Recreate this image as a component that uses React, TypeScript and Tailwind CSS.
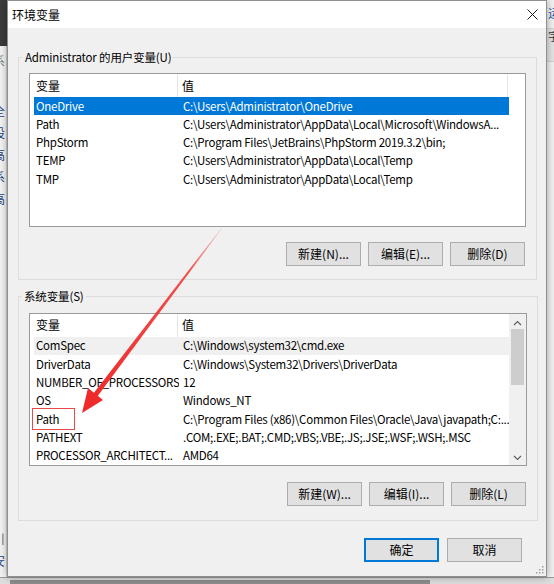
import type { ReactNode } from 'react'

type Row = [string, string]

const userVars: Row[] = [
  ['OneDrive', String.raw`C:\Users\Administrator\OneDrive`],
  ['Path', String.raw`C:\Users\Administrator\AppData\Local\Microsoft\WindowsA...`],
  ['PhpStorm', String.raw`C:\Program Files\JetBrains\PhpStorm 2019.3.2\bin;`],
  ['TEMP', String.raw`C:\Users\Administrator\AppData\Local\Temp`],
  ['TMP', String.raw`C:\Users\Administrator\AppData\Local\Temp`],
]

const sysVars: Row[] = [
  ['ComSpec', String.raw`C:\Windows\system32\cmd.exe`],
  ['DriverData', String.raw`C:\Windows\System32\Drivers\DriverData`],
  ['NUMBER_OF_PROCESSORS', '12'],
  ['OS', 'Windows_NT'],
  ['Path', String.raw`C:\Program Files (x86)\Common Files\Oracle\Java\javapath;C:...`],
  ['PATHEXT', '.COM;.EXE;.BAT;.CMD;.VBS;.VBE;.JS;.JSE;.WSF;.WSH;.MSC'],
  ['PROCESSOR_ARCHITECT...', 'AMD64'],
]

function WinButton({ children, primary }: { children: ReactNode; primary?: boolean }) {
  return (
    <button
      className={[
        'w-[75px] h-[24px] bg-[#e1e1e1] text-[12px] text-black flex items-center justify-center',
        primary ? 'border-2 border-[#0078d7]' : 'border border-[#adadad]',
      ].join(' ')}
    >
      {children}
    </button>
  )
}

function ListHeader({ scroll }: { scroll?: boolean }) {
  return (
    <div className="h-[23px] flex items-center text-[12px]">
      <div className="w-[148px] h-full pl-[6px] flex items-center border-r border-[#e5e5e5]">变量</div>
      <div
        className={[
          'h-full pl-[4px] flex items-center',
          scroll ? 'flex-1' : 'w-[330px] border-r border-[#e5e5e5]',
        ].join(' ')}
      >
        值
      </div>
    </div>
  )
}

function ListRows({ rows, selected, hover, rowH }: { rows: Row[]; selected?: number; hover?: number; rowH: string }) {
  return (
    <div className="flex flex-col">
      {rows.map(([name, value], i) => (
        <div
          key={name + i}
          className={[
            'ml-[4px] w-[475px] flex items-center text-[11.5px] tracking-[-0.25px] whitespace-nowrap',
            rowH,
            i === selected ? 'bg-[#0078d7] text-white' : i === hover ? 'bg-[#f0f0f0] text-black' : 'text-black',
          ].join(' ')}
        >
          <div className="w-[145px] pl-[2px] overflow-hidden">{name}</div>
          <div className="flex-1 pl-[4px] overflow-hidden">{value}</div>
        </div>
      ))}
    </div>
  )
}

function Chevron({ up }: { up?: boolean }) {
  return (
    <svg width="9" height="6" viewBox="0 0 9 6">
      <path d={up ? 'M1 5 L4.5 1.5 L8 5' : 'M1 1 L4.5 4.5 L8 1'} fill="none" stroke="#606060" strokeWidth="1.2" />
    </svg>
  )
}

export default function App() {
  return (
    <div className="relative w-[554px] h-[584px] overflow-hidden bg-[#ececec] font-['Noto_Sans_CJK_SC','Microsoft_YaHei',sans-serif] text-black">
      {/* windows behind the dialog */}
      <div className="absolute left-0 top-0 w-[7px] h-[46px] bg-[#3b3b3b]" />
      <div className="absolute left-0 top-[46px] w-[7px] h-[531px] bg-[#f4f4f4] border-r border-[#d0d0d0]" />
      <div className="absolute left-[-7px] top-[52px] flex flex-col gap-[6px] text-[12px] leading-[18px] text-[#7a7a7a]">
        <span>系</span>
      </div>
      <div className="absolute left-[-7px] top-[100px] flex flex-col text-[12px] leading-[22px] text-[#1c3f7a]">
        <span>全</span>
        <span>设</span>
        <span>高</span>
        <span>系</span>
        <span>高</span>
      </div>
      <div className="absolute left-[-7px] top-[528px] flex flex-col text-[12px] leading-[22px] text-[#1c3f7a]">
        <span className="text-[#6a6a6a]">引</span>
        <span>安</span>
      </div>
      <div className="absolute right-0 top-0 w-[8px] h-[577px] bg-[#f2f2f2]" />
      <div className="absolute right-0 top-[28px] w-[8px] h-[34px] bg-[#e4e4e4] border-y border-[#d4d4d4]" />
      <div className="absolute left-[548px] top-[4px] text-[12px] text-[#1c5aa8]">运</div>
      <div className="absolute left-[548px] top-[28px] text-[11px] text-[#333]">字</div>
      <div className="absolute left-0 top-[577px] w-[554px] h-[7px] bg-[#dedede] border-t border-[#9a9a9a]" />
      <div className="absolute left-[10px] top-[580px] w-[420px] h-[4px] bg-[#8c8c8c]" />

      {/* dialog */}
      <div className="absolute left-[7px] top-0 w-[540px] h-[577px] border border-[#8f8f8f] bg-[#f0f0f0] shadow-[0_0_8px_rgba(0,0,0,0.35)] flex flex-col">
        <div className="h-[27px] bg-white flex items-center justify-between pl-[4px] pr-[8px] shrink-0">
          <span className="text-[12px]">环境变量</span>
          <svg width="11" height="11" viewBox="0 0 11 11">
            <path d="M0.5 0.5 L10.5 10.5 M10.5 0.5 L0.5 10.5" stroke="#1a1a1a" strokeWidth="1" />
          </svg>
        </div>

        <div className="flex flex-col pl-[10px] pr-[9px]">
          <fieldset className="mt-[21px] border border-[#dcdcdc] px-[10px] pb-[13px]">
            <legend className="ml-[-6px] px-[2px] text-[11.5px] tracking-[-0.15px] leading-[17px]">
              Administrator 的用户变量(U)
            </legend>
            <div className="mt-[7px] h-[154px] border border-[#9a9a9a] bg-white flex flex-col">
              <ListHeader />
              <ListRows rows={userVars} selected={0} rowH="h-[18.3px]" />
            </div>
            <div className="mt-[15px] flex justify-end gap-[7px] pr-[1px]">
              <WinButton>新建(N)...</WinButton>
              <WinButton>编辑(E)...</WinButton>
              <WinButton>删除(D)</WinButton>
            </div>
          </fieldset>

          <fieldset className="mt-[8px] border border-[#dcdcdc] px-[10px] pb-[14px]">
            <legend className="ml-[-7px] px-[2px] text-[11.5px] tracking-[-0.15px] leading-[17px]">系统变量(S)</legend>
            <div className="mt-[8px] h-[153px] border border-[#9a9a9a] bg-white flex">
              <div className="flex-1 flex flex-col">
                <ListHeader scroll />
                <ListRows rows={sysVars} hover={0} rowH="h-[18.3px]" />
              </div>
              <div className="w-[17px] h-full bg-[#f0f0f0] flex flex-col items-center">
                <div className="h-[15px] flex items-center justify-center pt-[2px]">
                  <Chevron up />
                </div>
                <div className="w-[13px] h-[56px] bg-[#cdcdcd]" />
                <div className="flex-1" />
                <div className="h-[15px] flex items-center justify-center">
                  <Chevron />
                </div>
              </div>
            </div>
            <div className="mt-[16px] flex justify-end gap-[7px] pr-[1px]">
              <WinButton>新建(W)...</WinButton>
              <WinButton>编辑(I)...</WinButton>
              <WinButton>删除(L)</WinButton>
            </div>
          </fieldset>

          <div className="mt-[17px] flex justify-end gap-[8px] pr-[15px]">
            <WinButton primary>确定</WinButton>
            <WinButton>取消</WinButton>
          </div>
        </div>

        <svg className="absolute right-[2px] bottom-[2px]" width="8" height="8" viewBox="0 0 8 8">
          <rect x="6" y="0" width="1.5" height="1.5" fill="#a0a0a0" />
          <rect x="3" y="3" width="1.5" height="1.5" fill="#a0a0a0" />
          <rect x="6" y="3" width="1.5" height="1.5" fill="#a0a0a0" />
          <rect x="0" y="6" width="1.5" height="1.5" fill="#a0a0a0" />
          <rect x="3" y="6" width="1.5" height="1.5" fill="#a0a0a0" />
          <rect x="6" y="6" width="1.5" height="1.5" fill="#a0a0a0" />
        </svg>
      </div>

      {/* annotation: red box and arrow */}
      <div className="absolute left-[32px] top-[408px] w-[43px] h-[22px] border border-[#e84a4a]" />
      <svg className="absolute left-0 top-0 pointer-events-none" width="554" height="584" viewBox="0 0 554 584">
        <defs>
          <linearGradient id="shaft" x1="221" y1="228" x2="90" y2="400" gradientUnits="userSpaceOnUse">
            <stop offset="0" stopColor="#ff3030" stopOpacity="0.1" />
            <stop offset="0.25" stopColor="#f23030" stopOpacity="0.85" />
            <stop offset="1" stopColor="#ee2a2a" stopOpacity="1" />
          </linearGradient>
        </defs>
        <polygon points="221.3,228 222,228.6 97,397 93,394" fill="url(#shaft)" />
        <polygon points="82,413 88,388 103,400" fill="#ee2a2a" />
      </svg>
    </div>
  )
}
